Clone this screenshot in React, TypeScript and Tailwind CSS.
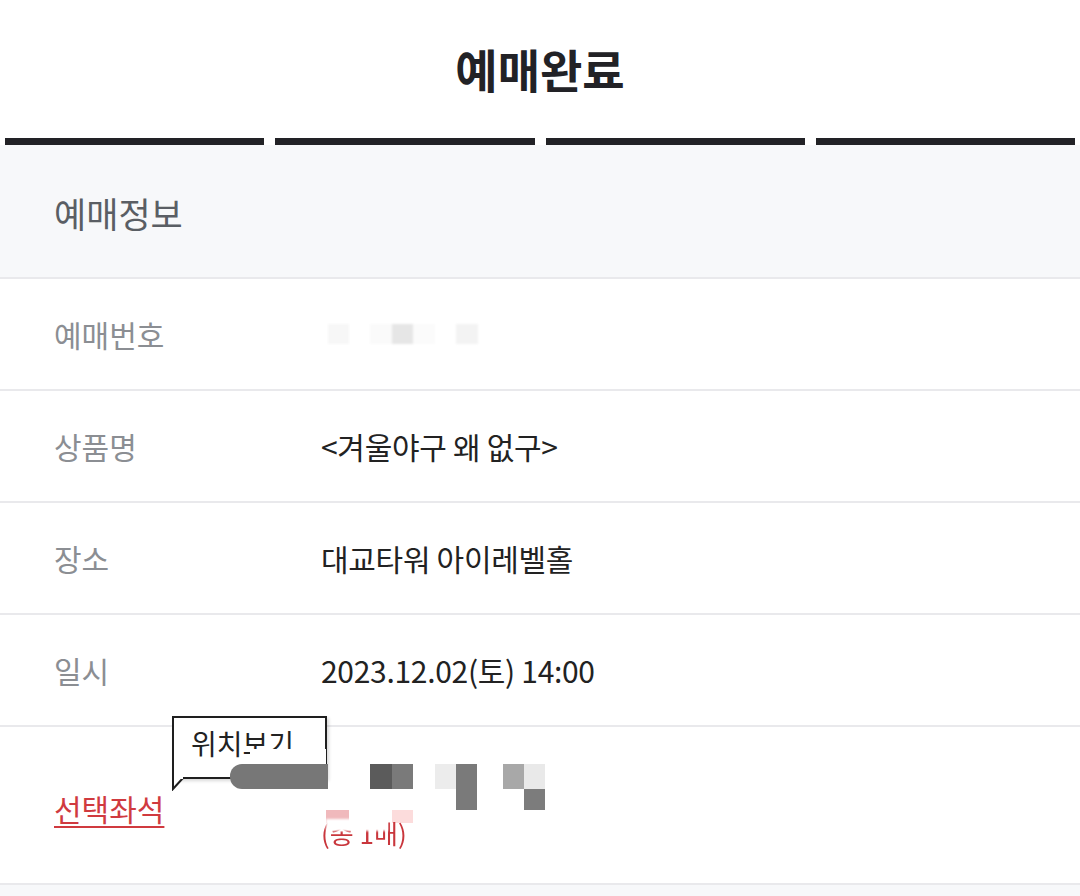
const rows = [
  { label: '예매번호', value: null },
  { label: '상품명', value: '<겨울야구 왜 없구>' },
  { label: '장소', value: '대교타워 아이레벨홀' },
  { label: '일시', value: '2023.12.02(토) 14:00' },
];

function MaskedNumber() {
  return (
    <div className="ml-[7px] flex items-center blur-[1px]">
      <div className="h-[20px] w-[21px] bg-[#f7f7f7]" />
      <div className="ml-[21px] h-[20px] w-[22px] bg-[#fafafa]" />
      <div className="h-[20px] w-[21px] bg-[#e6e6e6]" />
      <div className="h-[20px] w-[22px] bg-[#fbfbfb]" />
      <div className="ml-[21px] h-[20px] w-[22px] bg-[#f3f3f3]" />
    </div>
  );
}

function SeatRow() {
  return (
    <div className="relative flex h-[158px] border-t-2 border-[#e9e9ec]">
      <div className="flex w-[321px] shrink-0 items-center pl-[54px] pt-[6px]">
        <span className="text-[30px] text-[#d03a3f] underline decoration-2 underline-offset-[5px]">선택좌석</span>
      </div>

      {/* tooltip */}
      <div className="absolute left-[172px] top-[-11px]">
        <div className="h-[63px] w-[155px] border-2 border-[#1f1f1f] bg-white pl-[17px] pt-[8px] shadow-[2px_2px_3px_rgba(0,0,0,0.15)]">
          <span className="text-[28px] leading-[34px] text-[#222]">위치보기</span>
        </div>
        <svg className="absolute left-0 top-[61px]" width="14" height="14" viewBox="0 0 14 14">
          <path d="M1 0 L1 12 L11 1" fill="white" stroke="#1f1f1f" strokeWidth="2" />
          <rect x="2" y="0" width="9" height="2" fill="white" />
        </svg>
      </div>

      {/* redacted seat info */}
      <div className="relative flex-1 pt-[37px]">
        <div className="relative ml-[-91px] h-[60px] blur-[0.6px]">
          <div className="absolute left-[20px] top-[-15px] h-[15px] w-[76px] bg-white" />
          <div className="absolute left-0 top-0 h-[25px] w-[98px] rounded-l-[12px] bg-[#777]" />
          <div className="absolute left-[140px] top-0 h-[25px] w-[22px] bg-[#5b5b5b]" />
          <div className="absolute left-[162px] top-0 h-[25px] w-[21px] bg-[#7a7a7a]" />
          <div className="absolute left-[205px] top-0 h-[25px] w-[21px] bg-[#ececec]" />
          <div className="absolute left-[226px] top-0 h-[46px] w-[21px] bg-[#7a7a7a]" />
          <div className="absolute left-[273px] top-0 h-[25px] w-[21px] bg-[#a8a8a8]" />
          <div className="absolute left-[294px] top-0 h-[25px] w-[21px] bg-[#e9e9e9]" />
          <div className="absolute left-[294px] top-[25px] h-[21px] w-[21px] bg-[#7c7c7c]" />
          <div className="absolute left-[96px] top-[46px] h-[13px] w-[23px] bg-[#f0b9bc]" />
          <div className="absolute left-[162px] top-[46px] h-[13px] w-[21px] bg-[#fcdcdc]" />
        </div>
        <div className="relative mt-[-8px] h-[34px]">
          <span className="block text-[26px] leading-[34px] text-[#c9363c]">(총 1매)</span>
          <div className="absolute left-[5px] top-[3px] h-[12px] w-[62px] bg-white blur-[1px]" />
        </div>
      </div>
    </div>
  );
}

export default function App() {
  return (
    <div className="w-[1080px] h-[896px] overflow-hidden bg-white font-['Noto_Sans_CJK_KR','Noto_Sans',sans-serif]">
      <header className="flex h-[138px] items-center justify-center pb-[2px]">
        <h1 className="text-[46px] font-bold text-[#222226]">예매완료</h1>
      </header>

      <div className="flex gap-[11px] px-[5px]">
        <div className="h-[7px] flex-1 bg-[#222226]" />
        <div className="h-[7px] flex-1 bg-[#222226]" />
        <div className="h-[7px] flex-1 bg-[#222226]" />
        <div className="h-[7px] flex-1 bg-[#222226]" />
      </div>

      <section className="flex h-[132px] items-center bg-[#f7f8fa] pl-[54px] pt-[4px]">
        <h2 className="text-[35px] text-[#5a5e64]">예매정보</h2>
      </section>

      {rows.map((row) => (
        <div key={row.label} className="flex h-[112px] items-center border-t-2 border-[#e9e9ec]">
          <div className="w-[321px] shrink-0 pl-[54px] text-[30px] text-[#8b8e93]">{row.label}</div>
          <div className="text-[30px] tracking-[-0.3px] text-[#222]">
            {row.value ?? <MaskedNumber />}
          </div>
        </div>
      ))}

      <SeatRow />

      <div className="h-[20px] border-t-2 border-[#e9e9ec] bg-[#f7f8fa]" />
    </div>
  );
}
